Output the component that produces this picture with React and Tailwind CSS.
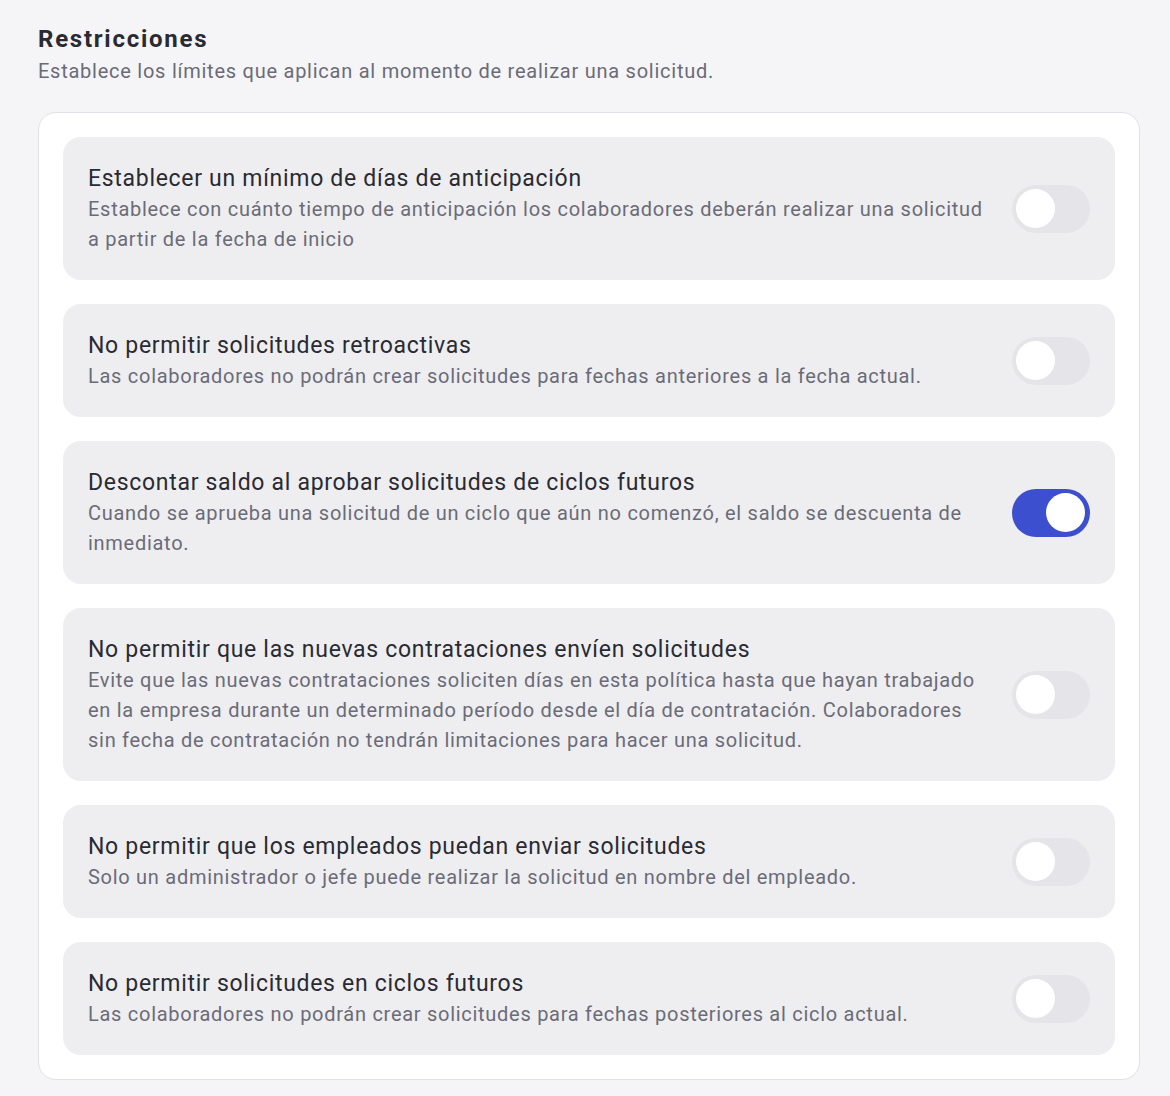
import React from "react";

const items = [
  {
    title: "Establecer un mínimo de días de anticipación",
    desc: "Establece con cuánto tiempo de anticipación los colaboradores deberán realizar una solicitud a partir de la fecha de inicio",
    on: false,
  },
  {
    title: "No permitir solicitudes retroactivas",
    desc: "Las colaboradores no podrán crear solicitudes para fechas anteriores a la fecha actual.",
    on: false,
  },
  {
    title: "Descontar saldo al aprobar solicitudes de ciclos futuros",
    desc: "Cuando se aprueba una solicitud de un ciclo que aún no comenzó, el saldo se descuenta de inmediato.",
    on: true,
  },
  {
    title: "No permitir que las nuevas contrataciones envíen solicitudes",
    desc: "Evite que las nuevas contrataciones soliciten días en esta política hasta que hayan trabajado en la empresa durante un determinado período desde el día de contratación. Colaboradores sin fecha de contratación no tendrán limitaciones para hacer una solicitud.",
    on: false,
  },
  {
    title: "No permitir que los empleados puedan enviar solicitudes",
    desc: "Solo un administrador o jefe puede realizar la solicitud en nombre del empleado.",
    on: false,
  },
  {
    title: "No permitir solicitudes en ciclos futuros",
    desc: "Las colaboradores no podrán crear solicitudes para fechas posteriores al ciclo actual.",
    on: false,
  },
];

function Toggle({ on }) {
  return (
    <div
      className={
        on
          ? "w-[78px] h-[48px] rounded-full bg-[#3b4fcf] flex items-center justify-end px-[5px] shrink-0"
          : "w-[78px] h-[48px] rounded-full bg-[#e4e4e9] flex items-center justify-start px-[4px] shrink-0"
      }
    >
      <div className="w-[39px] h-[39px] rounded-full bg-white" />
    </div>
  );
}

export default function App() {
  return (
    <div
      className="min-h-[1096px] bg-[#f5f5f7] pl-[38px] pr-[30px] pt-[24px] pb-[19px]"
      style={{ fontFamily: "Roboto, 'Noto Sans', sans-serif" }}
    >
      <h1 className="text-[24px] leading-[30px] font-bold text-[#2a2a32] tracking-[1.75px]">Restricciones</h1>
      <p className="text-[20px] leading-[26px] text-[#6b6b78] mt-[4px] tracking-[0.75px]">
        Establece los límites que aplican al momento de realizar una solicitud.
      </p>
      <div className="mt-[28px] bg-white border border-[#e1e1e7] rounded-[18px] p-[24px] flex flex-col gap-[24px]">
        {items.map((it, i) => (
          <div
            key={i}
            className="bg-[#eeeef1] rounded-[18px] pl-[25px] pr-[25px] py-[26px] flex items-center gap-[20px]"
          >
            <div className="flex-1 min-w-0">
              <div className="text-[23px] leading-[31px] text-[#2a2a32] tracking-[0.7px]">{it.title}</div>
              <div className="text-[20px] leading-[30px] text-[#6b6b78] tracking-[0.72px]">{it.desc}</div>
            </div>
            <Toggle on={it.on} />
          </div>
        ))}
      </div>
    </div>
  );
}
